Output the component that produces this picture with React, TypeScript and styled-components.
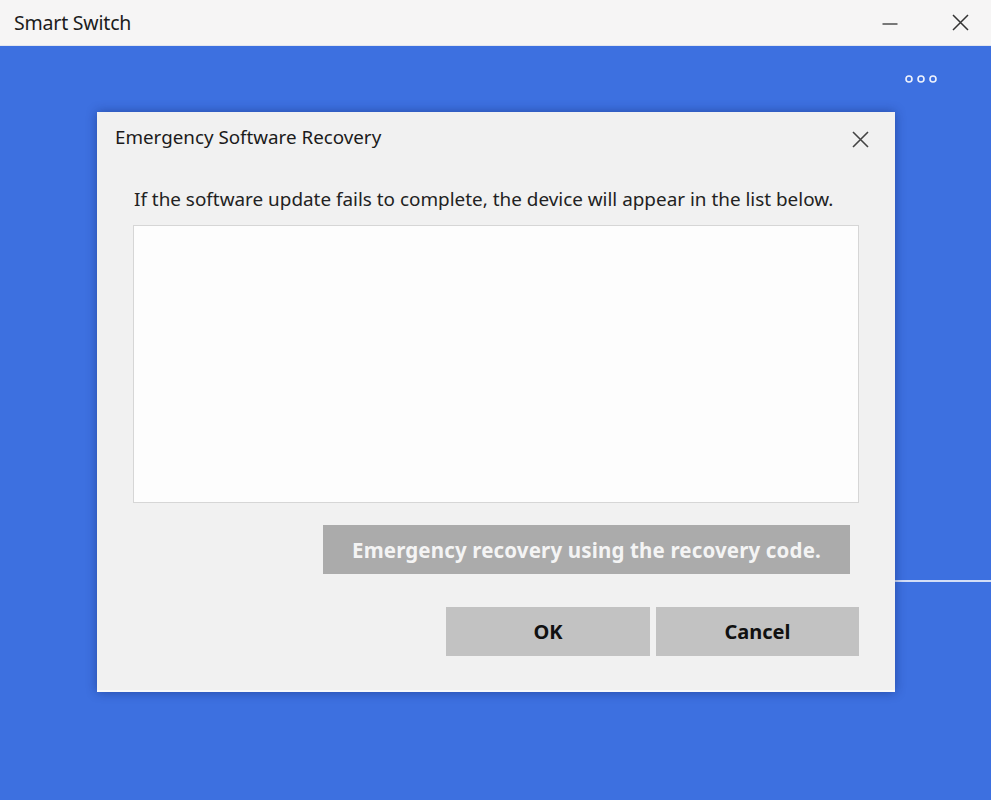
import React from "react";
import styled, { createGlobalStyle } from "styled-components";

const GlobalStyle = createGlobalStyle`
  html, body {
    margin: 0;
    padding: 0;
    background: #3d70e0;
  }
  body {
    font-family: "Noto Sans", "Open Sans", sans-serif;
  }
`;

const Window = styled.div`
  width: 991px;
  height: 800px;
  display: flex;
  flex-direction: column;
  overflow: hidden;
`;

const TitleBar = styled.div`
  height: 46px;
  flex-shrink: 0;
  background: #f6f5f5;
  display: flex;
  align-items: center;
  padding-left: 14px;
  border-bottom: 1px solid #e3e6ee;
  box-sizing: border-box;
`;

const AppTitle = styled.div`
  flex: 1;
  font-size: 19.5px;
  color: #1c1c1c;
  letter-spacing: -0.2px;
`;

const WinControls = styled.div`
  display: flex;
  align-items: center;
  gap: 10px;
  padding-right: 1px;
`;

const WinButton = styled.div`
  width: 60px;
  height: 46px;
  display: flex;
  align-items: center;
  justify-content: center;
  color: #333;
`;

const Stage = styled.div`
  position: relative;
  flex: 1;
  background: #3d70e0;
  display: flex;
  flex-direction: column;
`;

const TopRow = styled.div`
  display: flex;
  justify-content: flex-end;
  padding: 28px 53px 0 0;
`;

const Divider = styled.div`
  margin: 496px 0 0 520px;
  height: 2px;
  background: #d3def7;
`;

const Dialog = styled.div`
  position: absolute;
  left: 97px;
  top: 66px;
  width: 798px;
  height: 580px;
  box-sizing: border-box;
  background: #f1f1f1;
  border-bottom: 2px solid #fafafa;
  box-shadow: 0 0 10px rgba(10, 30, 90, 0.45);
  display: flex;
  flex-direction: column;
`;

const DialogHeader = styled.div`
  height: 50px;
  display: flex;
  align-items: center;
  padding: 0 24px 0 18px;
`;

const DialogTitle = styled.div`
  flex: 1;
  font-size: 18.8px;
  color: #1b1b1b;
`;

const CloseIcon = styled.div`
  width: 22px;
  height: 22px;
  display: flex;
  align-items: center;
  justify-content: center;
  margin-top: 4px;
`;

const Body = styled.div`
  flex: 1;
  display: flex;
  flex-direction: column;
  padding: 0 36px;
`;

const Message = styled.div`
  margin-top: 25px;
  padding-left: 1px;
  font-size: 18.9px;
  color: #222;
  line-height: 24px;
`;

const ListBox = styled.div`
  margin-top: 14px;
  height: 278px;
  box-sizing: border-box;
  background: #fdfdfd;
  border: 1px solid #d6d6d6;
`;

const ActionRow = styled.div<{ $gap: number; $inset?: number }>`
  display: flex;
  justify-content: flex-end;
  gap: 6px;
  margin-top: ${(p) => p.$gap}px;
  padding-right: ${(p) => p.$inset || 0}px;
`;

const FlatButton = styled.button<{ $width: number; $tone: "dark" | "light" }>`
  width: ${(p) => p.$width}px;
  height: 49px;
  border: none;
  padding: 0;
  font-family: "Noto Sans", "Open Sans", sans-serif;
  font-weight: 700;
  font-size: ${(p) => (p.$tone === "dark" ? 20.5 : 20)}px;
  background: ${(p) => (p.$tone === "dark" ? "#ababab" : "#c2c2c2")};
  color: ${(p) => (p.$tone === "dark" ? "#f4f4f4" : "#111")};
  letter-spacing: ${(p) => (p.$tone === "dark" ? "0.15px" : "0")};
`;

const Dot = () => (
  <circle r="3" fill="none" stroke="#eef2fc" strokeWidth="1.6" />
);

export default function App() {
  return (
    <>
      <GlobalStyle />
      <Window>
        <TitleBar>
          <AppTitle>Smart Switch</AppTitle>
          <WinControls>
            <WinButton>
              <svg width="16" height="16" viewBox="0 0 16 16">
                <line x1="0.5" y1="9" x2="15.5" y2="9" stroke="#333" strokeWidth="1.3" />
              </svg>
            </WinButton>
            <WinButton>
              <svg width="17" height="17" viewBox="0 0 17 17">
                <path d="M1 1 L16 16 M16 1 L1 16" stroke="#333" strokeWidth="1.5" />
              </svg>
            </WinButton>
          </WinControls>
        </TitleBar>
        <Stage>
          <TopRow>
            <svg width="34" height="10" viewBox="0 0 34 10">
              <g transform="translate(5 5)"><Dot /></g>
              <g transform="translate(17 5)"><Dot /></g>
              <g transform="translate(29 5)"><Dot /></g>
            </svg>
          </TopRow>
          <Divider />
          <Dialog>
            <DialogHeader>
              <DialogTitle>Emergency Software Recovery</DialogTitle>
              <CloseIcon>
                <svg width="17" height="17" viewBox="0 0 17 17">
                  <path d="M1 1 L16 16 M16 1 L1 16" stroke="#444" strokeWidth="1.6" />
                </svg>
              </CloseIcon>
            </DialogHeader>
            <Body>
              <Message>
                If the software update fails to complete, the device will appear in the list below.
              </Message>
              <ListBox />
              <ActionRow $gap={22} $inset={9}>
                <FlatButton $width={527} $tone="dark">
                  Emergency recovery using the recovery code.
                </FlatButton>
              </ActionRow>
              <ActionRow $gap={33}>
                <FlatButton $width={204} $tone="light">OK</FlatButton>
                <FlatButton $width={203} $tone="light">Cancel</FlatButton>
              </ActionRow>
            </Body>
          </Dialog>
        </Stage>
      </Window>
    </>
  );
}
